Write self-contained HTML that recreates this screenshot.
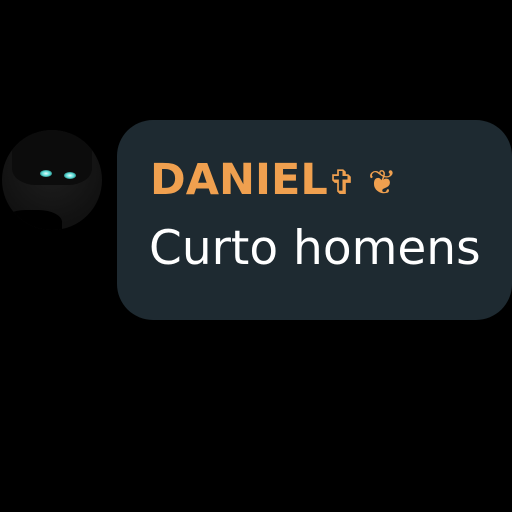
<!DOCTYPE html>
<html><head><style>
html,body{margin:0;padding:0;background:#000;width:512px;height:512px;overflow:hidden;position:relative}
.av{position:absolute;left:2px;top:130px;width:100px;height:100px;border-radius:50%;background:radial-gradient(circle at 50% 40%,#1e1e1e,#111 70%);overflow:hidden}
.eye{position:absolute;width:12px;height:7px;border-radius:50%;background:radial-gradient(#e8ffff,#4fd6d0 50%,rgba(30,120,120,0) 100%)}
.b{position:absolute;left:117px;top:120px;width:395px;height:200px;background:#1e2a31;border-radius:36px}
.n{position:absolute;left:150px;top:155px;font:bold 43px "DejaVu Sans",sans-serif;color:#f0a04f;white-space:nowrap}
.m{position:absolute;left:149px;top:221px;font:47px "DejaVu Sans",sans-serif;color:#fff;white-space:nowrap}
</style></head><body>
<div class="av">
<div style="position:absolute;left:10px;top:0;width:80px;height:55px;background:#0c0c0c;border-radius:40% 40% 30% 30%"></div>
<div class="eye" style="left:38px;top:40px"></div>
<div class="eye" style="left:62px;top:42px"></div>
<div style="position:absolute;left:0;top:80px;width:60px;height:30px;background:#000;border-radius:40%"></div>
</div>
<div class="b"></div>
<div class="n">DANIEL<span style="font-size:34px">✞ ❦</span></div>
<div class="m">Curto homens</div>
</body></html>
